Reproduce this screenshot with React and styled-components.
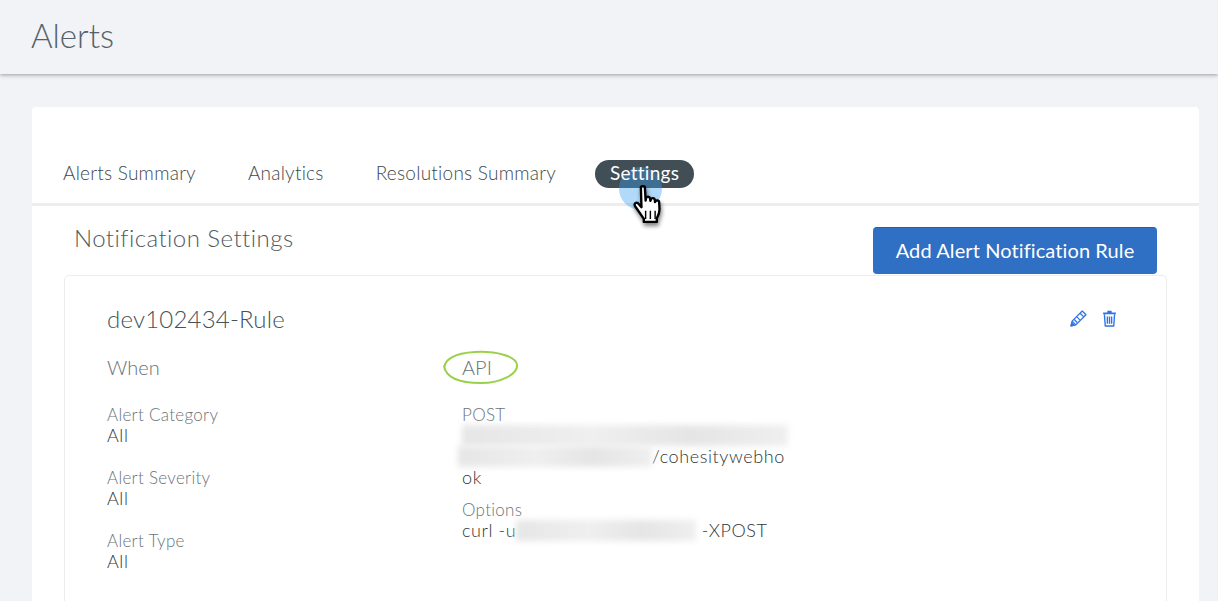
import React from 'react'
import styled, { createGlobalStyle } from 'styled-components'

const tabs = ['Alerts Summary', 'Analytics', 'Resolutions Summary', 'Settings']
const filters = [
  ['Alert Category', 'All'],
  ['Alert Severity', 'All'],
  ['Alert Type', 'All'],
]

function App() {
  return (
    <Page>
      <GlobalStyle />
      <Header>
        <h1>Alerts</h1>
      </Header>
      <Main>
        <Panel>
          <TabBar>
            {tabs.map((t) => (
              <Tab key={t} $active={t === 'Settings'}>
                <TabText>{t}</TabText>
                {t === 'Settings' && <ClickDot />}
                {t === 'Settings' && <Cursor />}
              </Tab>
            ))}
          </TabBar>
          <Toolbar>
            <h2>Notification Settings</h2>
            <AddButton>Add Alert Notification Rule</AddButton>
          </Toolbar>
          <RuleCard>
            <RuleHead>
              <h3>dev102434-Rule</h3>
              <Actions>
                <PencilIcon />
                <TrashIcon />
              </Actions>
            </RuleHead>
            <WhenRow>
              <span>When</span>
              <ApiLabel>
                API
                <Scribble />
              </ApiLabel>
            </WhenRow>
            <Details>
              <Column>
                {filters.map(([label, value]) => (
                  <Field key={label}>
                    <Label>{label}</Label>
                    <Value>{value}</Value>
                  </Field>
                ))}
              </Column>
              <Column $narrow>
                <Field>
                  <Label>POST</Label>
                  <Value>
                    <Blur $w={326} />
                    <Blur $w={194} $shift={-4} />
                    /cohesitywebhook
                  </Value>
                </Field>
                <OptionsField>
                  <Label>Options</Label>
                  <Value>
                    curl -u
                    <Blur $w={180} />
                    {' '}-XPOST
                  </Value>
                </OptionsField>
              </Column>
            </Details>
          </RuleCard>
        </Panel>
      </Main>
    </Page>
  )
}

export default App

function Cursor() {
  return (
    <CursorSvg viewBox="0 0 32 38" width="38" height="46">
      <path
        d="M10 3.5c0-1.5 3.2-1.5 3.4 0l.6 11 .4-2.4c.5-1.3 3-1.2 3.3.3l.3 2.300.6-1.600c.6-1.200 2.900-.9 3.100.6l.2 2 .6-.9c.8-1 2.800-.5 2.900 1l.3 6c0 3-1 5.500-2.300 7.600v3H12.500v-2.500L5 19c-1-2 1-3.500 2.600-2.300L10.500 20z"
        fill="#fff"
        stroke="#000"
        strokeWidth="2"
        strokeLinejoin="round"
      />
      <path d="M14 23v7M18 23v7M22 23v7" stroke="#000" strokeWidth="1.200" />
    </CursorSvg>
  )
}

function PencilIcon() {
  return (
    <svg viewBox="0 0 16 16" width="17" height="17" fill="none" stroke="#2f74e6" strokeWidth="1.200" strokeLinejoin="round">
      <path d="M1 15l1-4.500L11.500 1l3.500 3.500L5.500 14z" />
      <path d="M2 10.500L5.500 14M4 9l3 3M6.500 6.500l3 3M9.500 3l3.500 3.500" />
      <path d="M1 15l.7-3 2.300 2.300z" fill="#2f74e6" />
    </svg>
  )
}

function TrashIcon() {
  return (
    <svg viewBox="0 0 14 16" width="15" height="17" fill="none" stroke="#2f74e6" strokeWidth="1.300" strokeLinejoin="round">
      <path d="M5 1.500h4M1 3.200h12" strokeWidth="1.800" />
      <path d="M2.200 4l.8 11h8l.8-11" />
      <path d="M5 6v7M7 6v7M9 6v7" />
    </svg>
  )
}

function Scribble() {
  return (
    <ScribbleSvg viewBox="0 0 78 36" width="78" height="36" fill="none">
      <path
        d="M4 20C1 10 14 3 34 2c21-1 41 4 42 13 1 9-16 18-36 18C20 33 5 28 3 16"
        stroke="#9ad14b"
        strokeWidth="2"
        strokeLinecap="round"
      />
    </ScribbleSvg>
  )
}

const GlobalStyle = createGlobalStyle`
html,body{
  margin:0;
  padding:0;
  height:601px;
  overflow:hidden;
  background:#f1f3f7;
}
*{
  box-sizing:border-box;
}
`
const Page=styled.div`
font-family:Lato,"Open Sans",sans-serif;
font-weight:300;
color:#5c6468;
`
const Header=styled.header`
height:74px;
padding:0 31px 4px;
display:flex;
align-items:center;
background:#f1f3f7;
box-shadow:0 1px 4px rgba(60,70,80,0.5);
h1{
  margin:0;
  font-size:33px;
  font-weight:300;
  color:#56616a;
}
`
const Main=styled.main`
padding:33px 19px 0 32px;
`
const Panel=styled.section`
background:#fff;
border-radius:4px 4px 0 0;
height:494px;
overflow:hidden;
`
const TabBar=styled.nav`
height:99px;
padding:53px 0 0 16px;
display:flex;
align-items:flex-start;
column-gap:22px;
border-bottom:3px solid #ecedee;
`
const Tab=styled.div`
position:relative;
height:28px;
margin-left:${(p) => (p.$active ? '2px' : '0')};
padding:0 15px;
border-radius:14px;
font-size:19px;
letter-spacing:0.25px;
line-height:26px;
font-weight:${(p) => (p.$active ? 400 : 300)};
color:${(p) => (p.$active ? '#fff' : '#3e484d')};
background:${(p) => (p.$active ? '#414e56' : 'transparent')};
`
const TabText=styled.span`
position:relative;
z-index:1;
`
const ClickDot=styled.span`
position:absolute;
left:24px;
top:7px;
width:43px;
height:43px;
border-radius:50%;
background:rgba(60,160,240,0.4);
`
const CursorSvg=styled.svg`
position:absolute;
z-index:2;
left:34px;
top:23px;
filter:drop-shadow(1px 3px 2px rgba(0,0,0,0.5));
`
const Toolbar=styled.div`
height:69px;
padding:17px 42px 0 42px;
display:flex;
justify-content:space-between;
align-items:flex-start;
h2{
  margin:0;
  font-size:24px;
  letter-spacing:0.45px;
  line-height:30px;
  font-weight:300;
  color:#4f5a5f;
}
`
const AddButton=styled.button`
width:284px;
height:47px;
margin-top:4px;
padding:0 0 3px;
border:none;
border-top:1px solid #1a5fb8;
border-radius:4px;
background:#2f6fc4;
color:#fff;
font-family:inherit;
font-size:20px;
letter-spacing:0.1px;
font-weight:400;
`
const RuleCard=styled.article`
margin:0 32px 0 32px;
height:340px;
padding:26px 49px 0 42px;
border:1px solid #eceded;
border-radius:5px 5px 0 0;
`
const RuleHead=styled.div`
display:flex;
justify-content:space-between;
align-items:center;
height:32px;
h3{
  margin:0;
  font-size:24px;
  letter-spacing:0.2px;
  font-weight:300;
  color:#475257;
}
`
const Actions=styled.div`
display:flex;
align-items:center;
column-gap:15px;
`
const WhenRow=styled.div`
display:grid;
grid-template-columns:355px 1fr;
margin-top:17px;
font-size:20px;
line-height:32px;
color:#6a7276;
`
const ApiLabel=styled.span`
position:relative;
`
const ScribbleSvg=styled.svg`
position:absolute;
left:-21px;
top:-1px;
`
const Details=styled.div`
display:grid;
grid-template-columns:355px 1fr;
margin-top:21px;
`
const Column=styled.div`
display:flex;
flex-direction:column;
row-gap:21px;
width:${(p) => (p.$narrow ? '328px' : 'auto')};
`
const Field=styled.div`
font-size:17px;
line-height:21px;
`
const OptionsField=styled(Field)`
margin-top:-10px;
`
const Label=styled.div`
letter-spacing:0.3px;
color:#6b7478;
`
const Value=styled.div`
color:#2c3539;
font-size:18px;
letter-spacing:0.6px;
font-weight:300;
word-break:break-all;
`
const Blur=styled.span`
display:inline-block;
vertical-align:top;
width:${(p) => p.$w}px;
height:21px;
margin-left:${(p) => p.$shift || 0}px;
background:linear-gradient(90deg,#e6e6e6,#efefef 40%,#e5e5e5 70%,#efefef);
filter:blur(3px);
`
